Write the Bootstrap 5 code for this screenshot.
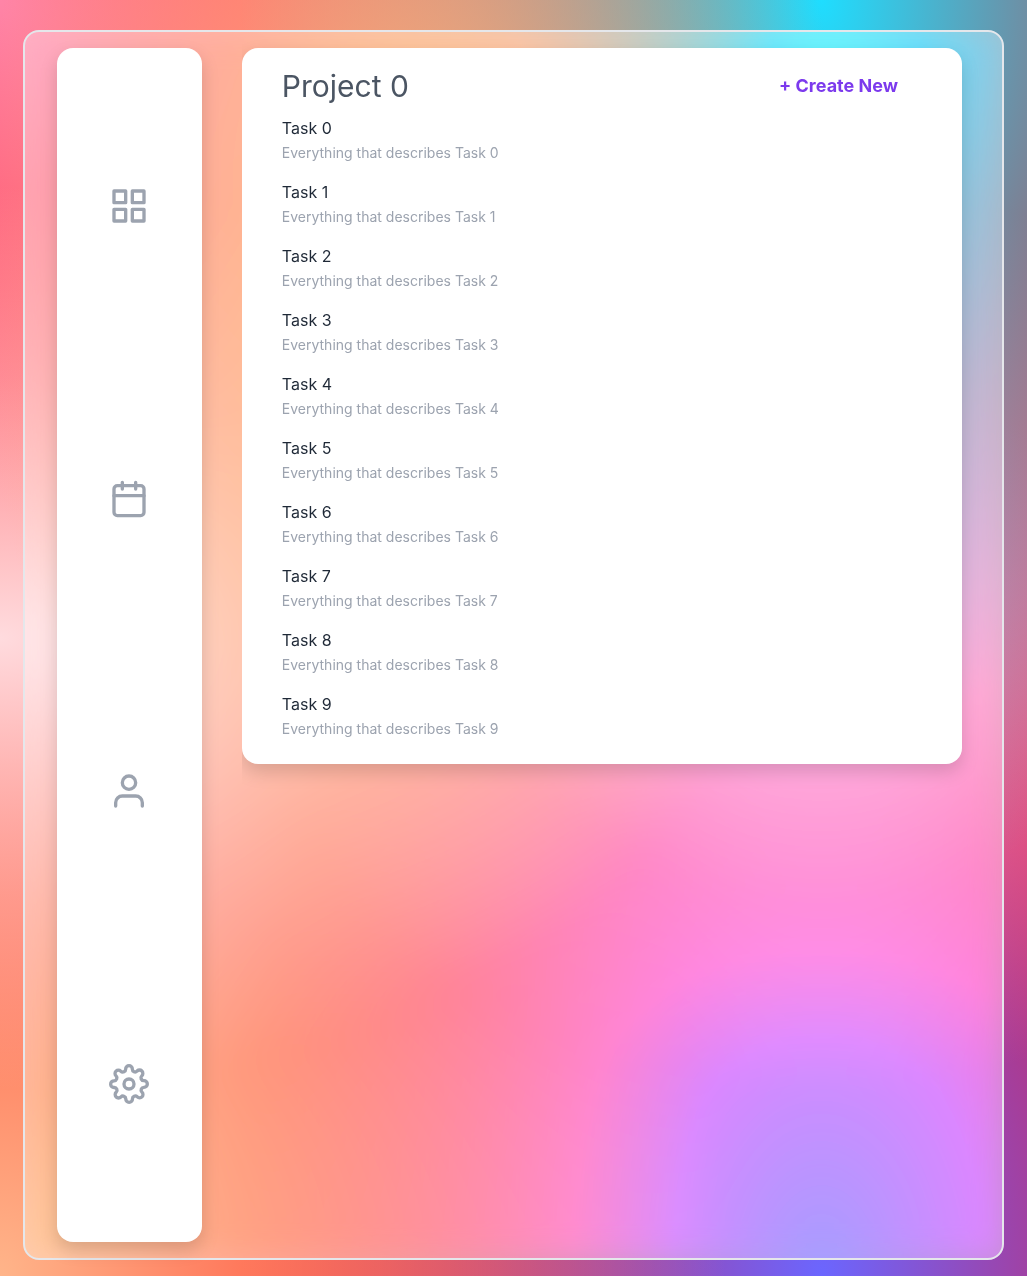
<!DOCTYPE html>
<html lang="en">
<head>
<meta charset="utf-8">
<meta name="viewport" content="width=device-width, initial-scale=1">
<title>Project 0</title>
<link href="https://cdn.jsdelivr.net/npm/bootstrap@5.3.0/dist/css/bootstrap.min.css" rel="stylesheet">
<style>
body{font-family:Inter,"Liberation Sans",sans-serif;color:#1f2937}
.mesh{padding:30px 23px 16px;background-color:#f00;background-image:
radial-gradient(at 40% 20%,hsla(28,100%,74%,1) 0,transparent 50%),
radial-gradient(at 80% 0%,hsla(189,100%,56%,1) 0,transparent 50%),
radial-gradient(at 0% 50%,hsla(355,100%,93%,1) 0,transparent 50%),
radial-gradient(at 80% 50%,hsla(340,100%,76%,1) 0,transparent 50%),
radial-gradient(at 0% 100%,hsla(22,100%,77%,1) 0,transparent 50%),
radial-gradient(at 80% 100%,hsla(242,100%,70%,1) 0,transparent 50%),
radial-gradient(at 0% 0%,hsla(343,100%,76%,1) 0,transparent 50%)}
.glass{border:2px solid #e5e7eb;border-radius:16px;padding:16px 32px;gap:40px;background:rgba(255,255,255,.4);backdrop-filter:blur(16px) brightness(1.02) saturate(1.8)}
.panel{background:#fff;border-radius:16px;box-shadow:0 8px 18px rgba(0,0,0,.15)}
.side{width:145px;padding:12px 0;color:#9ca3af}
.side svg{display:block;width:40px;height:40px;position:relative;left:-.5px}
.board{clip-path:inset(-16px -40px -40px 0)}
.project{width:720px;padding:20px 40px 25px 39.8px}
.title{font-size:30px;line-height:36px;font-weight:400;color:#4b5563}
.create{font-size:18px;line-height:28px;font-weight:700;color:#7c3aed;margin-right:24px}
.task{height:64px}
.task:last-child{height:47px}
.task h2{font-size:16px;line-height:24px;font-weight:400;margin:0 0 3px}
.task p{font-size:14px;line-height:20px;color:#9ca3af;margin:0}
</style>
</head>
<body>
<div class="mesh vh-100">
<div class="glass d-flex h-100">
<nav class="panel side d-flex flex-column align-items-center justify-content-around flex-shrink-0">
<svg viewBox="0 0 24 24" fill="none" stroke="currentColor" stroke-width="2" stroke-linecap="round" stroke-linejoin="round"><path d="M3 3h7v7H3zM14 3h7v7h-7zM14 14h7v7h-7zM3 14h7v7H3z"/></svg>
<svg viewBox="0 0 24 24" fill="none" stroke="currentColor" stroke-width="2" stroke-linecap="round" stroke-linejoin="round"><rect x="3" y="4" width="18" height="18" rx="2"/><path d="M16 2v4M8 2v4M3 10h18"/></svg>
<svg viewBox="0 0 24 24" fill="none" stroke="currentColor" stroke-width="2" stroke-linecap="round" stroke-linejoin="round"><path d="M20 21v-2a4 4 0 0 0-4-4H8a4 4 0 0 0-4 4v2"/><circle cx="12" cy="7" r="4"/></svg>
<svg viewBox="0 0 24 24" fill="none" stroke="currentColor" stroke-width="2" stroke-linecap="round" stroke-linejoin="round"><circle cx="12" cy="12" r="3"/><path d="M19.4 15a1.65 1.65 0 0 0 .33 1.82l.06.06a2 2 0 0 1 0 2.83 2 2 0 0 1-2.83 0l-.06-.06a1.65 1.65 0 0 0-1.82-.33 1.65 1.65 0 0 0-1 1.51V21a2 2 0 0 1-2 2 2 2 0 0 1-2-2v-.09A1.65 1.65 0 0 0 9 19.4a1.65 1.65 0 0 0-1.82.33l-.06.06a2 2 0 0 1-2.83 0 2 2 0 0 1 0-2.83l.06-.06a1.65 1.65 0 0 0 .33-1.82 1.65 1.65 0 0 0-1.51-1H3a2 2 0 0 1-2-2 2 2 0 0 1 2-2h.09A1.65 1.65 0 0 0 4.6 9a1.65 1.65 0 0 0-.33-1.82l-.06-.06a2 2 0 0 1 0-2.83 2 2 0 0 1 2.83 0l.06.06a1.65 1.65 0 0 0 1.82.33H9a1.65 1.65 0 0 0 1-1.51V3a2 2 0 0 1 2-2 2 2 0 0 1 2 2v.09a1.65 1.65 0 0 0 1 1.51 1.65 1.65 0 0 0 1.82-.33l.06-.06a2 2 0 0 1 2.83 0 2 2 0 0 1 0 2.83l-.06.06a1.65 1.65 0 0 0-.33 1.82V9a1.65 1.65 0 0 0 1.51 1H21a2 2 0 0 1 2 2 2 2 0 0 1-2 2h-.09a1.65 1.65 0 0 0-1.51 1z"/></svg>
</nav>
<main class="board">
<section class="panel project">
<div class="d-flex justify-content-between align-items-center mb-2 pb-1">
<h1 class="title m-0">Project 0</h1>
<a class="create text-decoration-none" href="#">+ Create New</a>
</div>
<div>
<div class="task"><h2>Task 0</h2><p>Everything that describes Task 0</p></div>
<div class="task"><h2>Task 1</h2><p>Everything that describes Task 1</p></div>
<div class="task"><h2>Task 2</h2><p>Everything that describes Task 2</p></div>
<div class="task"><h2>Task 3</h2><p>Everything that describes Task 3</p></div>
<div class="task"><h2>Task 4</h2><p>Everything that describes Task 4</p></div>
<div class="task"><h2>Task 5</h2><p>Everything that describes Task 5</p></div>
<div class="task"><h2>Task 6</h2><p>Everything that describes Task 6</p></div>
<div class="task"><h2>Task 7</h2><p>Everything that describes Task 7</p></div>
<div class="task"><h2>Task 8</h2><p>Everything that describes Task 8</p></div>
<div class="task"><h2>Task 9</h2><p>Everything that describes Task 9</p></div>
</div>
</section>
</main>
</div>
</div>
<script src="https://cdn.jsdelivr.net/npm/bootstrap@5.3.0/dist/js/bootstrap.bundle.min.js"></script>
</body>
</html>
